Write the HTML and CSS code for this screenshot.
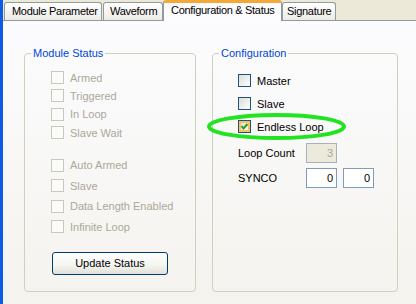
FILE: index.html
```html
<!DOCTYPE html>
<html lang="en">
<head>
    <meta charset="UTF-8">
    <title>Configuration &amp; Status</title>
    <link rel="stylesheet" href="styles.css">
</head>
<body>
    <div class="window">
        <div class="tabs">
            <div class="tab tab-module">Module Parameter</div>
            <div class="tab tab-wave">Waveform</div>
            <div class="tab tab-active">Configuration &amp; Status</div>
            <div class="tab tab-sig">Signature</div>
        </div>

        <div class="pane">
            <fieldset class="group group-status">
                <legend>Module Status</legend>
                <div class="checks checks-first">
                    <label class="check disabled"><span class="box"></span>Armed</label>
                    <label class="check disabled"><span class="box"></span>Triggered</label>
                    <label class="check disabled"><span class="box"></span>In Loop</label>
                    <label class="check disabled"><span class="box"></span>Slave Wait</label>
                </div>
                <div class="checks checks-second">
                    <label class="check disabled"><span class="box"></span>Auto Armed</label>
                    <label class="check disabled"><span class="box"></span>Slave</label>
                    <label class="check disabled"><span class="box"></span>Data Length Enabled</label>
                    <label class="check disabled"><span class="box"></span>Infinite Loop</label>
                </div>
                <button class="btn" type="button">Update Status</button>
            </fieldset>

            <fieldset class="group group-config">
                <legend>Configuration</legend>
                <div class="checks checks-config">
                    <label class="check"><span class="box"></span>Master</label>
                    <label class="check"><span class="box"></span>Slave</label>
                    <label class="check">
                        <span class="box box-hot">
                            <svg width="11" height="11" viewBox="0 0 11 11"><polyline points="2.5,5 4.5,7.5 8.5,3" fill="none" stroke="#21a121" stroke-width="2"/></svg>
                        </span>Endless Loop
                    </label>
                </div>
                <div class="field-row field-loop">
                    <span class="field-label">Loop Count</span>
                    <span class="textbox textbox-off">3</span>
                </div>
                <div class="field-row field-synco">
                    <span class="field-label">SYNCO</span>
                    <span class="textbox">0</span>
                    <span class="textbox">0</span>
                </div>
            </fieldset>
        </div>

        <!-- annotation ring drawn over the screenshot -->
        <svg class="highlight" width="144" height="31" viewBox="0 0 144 31">
            <ellipse cx="71.5" cy="15.5" rx="67.5" ry="11.5" fill="none" stroke="#22e322" stroke-width="4"/>
        </svg>
    </div>
</body>
</html>
```

FILE: styles.css
```css
* {
    box-sizing: border-box;
}

body {
    margin: 0;
    font-family: 'Liberation Sans', Arial, sans-serif;
    font-size: 11px;
    color: #000;
}

.window {
    position: relative;
    width: 416px;
    height: 304px;
    border-left: 3px solid #0d5ae5;
    background: #ece9d8;
    overflow: hidden;
    display: flex;
    flex-direction: column;
}

/* tab strip */
.tabs {
    height: 20px;
    flex-shrink: 0;
    display: flex;
    align-items: flex-end;
    padding-left: 1px;
}

.tab {
    height: 18px;
    border: 1px solid #919b9c;
    border-bottom: none;
    border-radius: 3px 3px 0 0;
    background: linear-gradient(#ffffff, #ecebe6);
    line-height: 17px;
    letter-spacing: -0.3px;
    white-space: nowrap;
    overflow: hidden;
}

.tab-module {
    width: 98px;
    padding-left: 7px;
}

.tab-wave {
    width: 60px;
    margin-left: 1px;
    padding-left: 6px;
}

.tab-active {
    position: relative;
    z-index: 1;
    width: 119px;
    height: 21px;
    margin-bottom: -1px;
    padding-left: 7px;
    border-top: 3px solid #f5a83a;
    background: #fcfcfe;
    line-height: 15px;
}

.tab-sig {
    width: 54px;
    padding-left: 4px;
}

/* page */
.pane {
    flex: 1;
    display: flex;
    gap: 16px;
    padding: 25px 0 0 21px;
    border-top: 1px solid #919b9c;
    background: linear-gradient(#fcfcfe, #f4f3ee);
}

.group {
    margin: 0;
    padding: 0;
    min-width: 0;
    height: 246px;
    border: 1px solid #d0d0bf;
    border-radius: 4px;
}

.group-status {
    width: 172px;
}

.group-config {
    width: 186px;
}

legend {
    margin-left: 6px;
    padding: 0 2px;
    color: #0046d5;
    line-height: 15px;
}

/* checkboxes */
.checks {
    display: flex;
    flex-direction: column;
    padding-left: 26px;
}

.checks-first {
    padding-top: 10px;
    gap: 5.4px;
}

.checks-second {
    margin-top: 19.8px;
    gap: 7.5px;
}

.checks-config {
    padding-top: 13px;
    padding-left: 25px;
    gap: 10px;
}

.check {
    display: flex;
    align-items: center;
    gap: 6px;
    height: 13px;
    white-space: nowrap;
}

.box {
    width: 13px;
    height: 13px;
    flex-shrink: 0;
    display: flex;
    border: 1px solid #1c5180;
    background: linear-gradient(135deg, #dcdcd7, #ffffff);
}

.box-hot {
    box-shadow: inset 0 0 0 2px #f9c25c;
}

.check.disabled {
    color: #aca899;
}

.check.disabled .box {
    border-color: #cac8bb;
    background: #fbfbf9;
}

/* button */
.btn {
    display: block;
    width: 116px;
    height: 23px;
    margin: 18.5px 0 0 27px;
    padding: 0;
    border: 1px solid #003c74;
    border-radius: 3px;
    background: linear-gradient(#ffffff, #f4f4f0 60%, #e2e0d6);
    font-family: inherit;
    font-size: 11px;
    color: #000;
}

/* text fields */
.field-row {
    display: flex;
    align-items: center;
    gap: 6px;
    padding-left: 25px;
}

.field-loop {
    margin-top: 10px;
}

.field-synco {
    margin-top: 5px;
}

.field-label {
    width: 62px;
    white-space: nowrap;
}

.textbox {
    width: 31px;
    height: 20px;
    padding-right: 3px;
    border: 1px solid #7f9db9;
    background: #fff;
    text-align: right;
    line-height: 18px;
}

.textbox-off {
    border-color: #a5b1bd;
    background: #ebeadb;
    color: #aca899;
}

.highlight {
    position: absolute;
    left: 202px;
    top: 111px;
}
```
